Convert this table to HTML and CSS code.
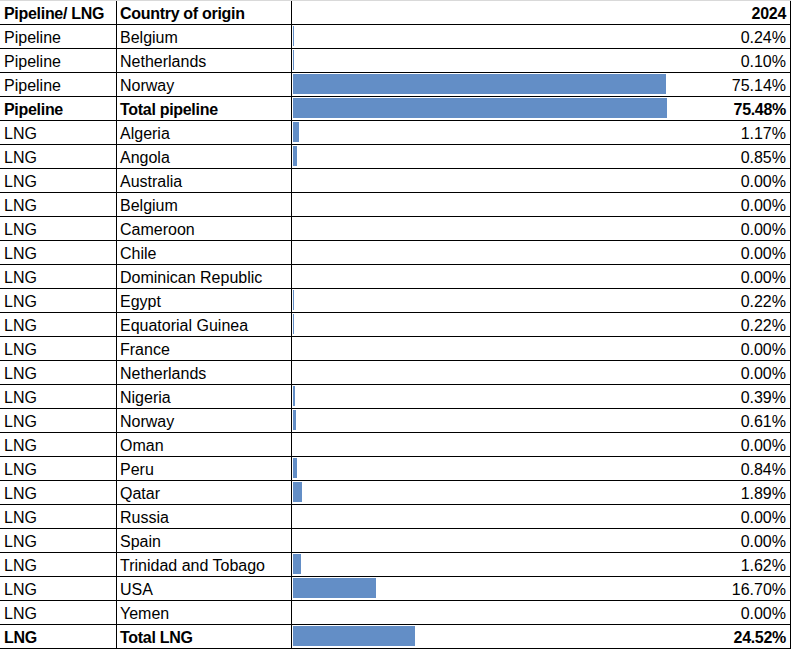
FILE: index.html
```html
<!DOCTYPE html>
<html>
<head>
<meta charset="utf-8">
<link rel="stylesheet" href="styles.css">
</head>
<body>
<div class="sheet">
  <div class="row bold"><div class="c1">Pipeline/ LNG</div><div class="c2">Country of origin</div><div class="c3"><span class="num">2024</span></div></div>
  <div class="row"><div class="c1">Pipeline</div><div class="c2">Belgium</div><div class="c3"><span class="bar" style="width:1.19px"></span><span class="num">0.24%</span></div></div>
  <div class="row"><div class="c1">Pipeline</div><div class="c2">Netherlands</div><div class="c3"><span class="bar" style="width:0.5px"></span><span class="num">0.10%</span></div></div>
  <div class="row"><div class="c1">Pipeline</div><div class="c2">Norway</div><div class="c3"><span class="bar" style="width:372.7px"></span><span class="num">75.14%</span></div></div>
  <div class="row bold"><div class="c1">Pipeline</div><div class="c2">Total pipeline</div><div class="c3"><span class="bar" style="width:374.4px"></span><span class="num">75.48%</span></div></div>
  <div class="row"><div class="c1">LNG</div><div class="c2">Algeria</div><div class="c3"><span class="bar" style="width:5.8px"></span><span class="num">1.17%</span></div></div>
  <div class="row"><div class="c1">LNG</div><div class="c2">Angola</div><div class="c3"><span class="bar" style="width:4.22px"></span><span class="num">0.85%</span></div></div>
  <div class="row"><div class="c1">LNG</div><div class="c2">Australia</div><div class="c3"><span class="num">0.00%</span></div></div>
  <div class="row"><div class="c1">LNG</div><div class="c2">Belgium</div><div class="c3"><span class="num">0.00%</span></div></div>
  <div class="row"><div class="c1">LNG</div><div class="c2">Cameroon</div><div class="c3"><span class="num">0.00%</span></div></div>
  <div class="row"><div class="c1">LNG</div><div class="c2">Chile</div><div class="c3"><span class="num">0.00%</span></div></div>
  <div class="row"><div class="c1">LNG</div><div class="c2">Dominican Republic</div><div class="c3"><span class="num">0.00%</span></div></div>
  <div class="row"><div class="c1">LNG</div><div class="c2">Egypt</div><div class="c3"><span class="bar" style="width:1.09px"></span><span class="num">0.22%</span></div></div>
  <div class="row"><div class="c1">LNG</div><div class="c2">Equatorial Guinea</div><div class="c3"><span class="bar" style="width:1.09px"></span><span class="num">0.22%</span></div></div>
  <div class="row"><div class="c1">LNG</div><div class="c2">France</div><div class="c3"><span class="num">0.00%</span></div></div>
  <div class="row"><div class="c1">LNG</div><div class="c2">Netherlands</div><div class="c3"><span class="num">0.00%</span></div></div>
  <div class="row"><div class="c1">LNG</div><div class="c2">Nigeria</div><div class="c3"><span class="bar" style="width:1.93px"></span><span class="num">0.39%</span></div></div>
  <div class="row"><div class="c1">LNG</div><div class="c2">Norway</div><div class="c3"><span class="bar" style="width:3.03px"></span><span class="num">0.61%</span></div></div>
  <div class="row"><div class="c1">LNG</div><div class="c2">Oman</div><div class="c3"><span class="num">0.00%</span></div></div>
  <div class="row"><div class="c1">LNG</div><div class="c2">Peru</div><div class="c3"><span class="bar" style="width:4.17px"></span><span class="num">0.84%</span></div></div>
  <div class="row"><div class="c1">LNG</div><div class="c2">Qatar</div><div class="c3"><span class="bar" style="width:9.37px"></span><span class="num">1.89%</span></div></div>
  <div class="row"><div class="c1">LNG</div><div class="c2">Russia</div><div class="c3"><span class="num">0.00%</span></div></div>
  <div class="row"><div class="c1">LNG</div><div class="c2">Spain</div><div class="c3"><span class="num">0.00%</span></div></div>
  <div class="row"><div class="c1">LNG</div><div class="c2">Trinidad and Tobago</div><div class="c3"><span class="bar" style="width:8.04px"></span><span class="num">1.62%</span></div></div>
  <div class="row"><div class="c1">LNG</div><div class="c2">USA</div><div class="c3"><span class="bar" style="width:82.8px"></span><span class="num">16.70%</span></div></div>
  <div class="row"><div class="c1">LNG</div><div class="c2">Yemen</div><div class="c3"><span class="num">0.00%</span></div></div>
  <div class="row bold"><div class="c1">LNG</div><div class="c2">Total LNG</div><div class="c3"><span class="bar" style="width:121.6px"></span><span class="num">24.52%</span></div></div>
</div>
</body>
</html>
```

FILE: styles.css
```css
html, body {
  margin: 0;
  padding: 0;
  background: #ffffff;
}

.sheet {
  width: 791px;
  border-top: 1px solid #d9d9d9;
  font-family: "Liberation Sans", Arial, sans-serif;
  font-size: 16px;
  color: #000000;
}

.row {
  display: grid;
  grid-template-columns: 117px 175px 499px;
  height: 24px;
  border-bottom: 1px solid #000000;
  box-sizing: border-box;
}

.row > div {
  border-right: 1px solid #000000;
  line-height: 21px;
  padding-top: 2px;
  white-space: nowrap;
  overflow: hidden;
}

.c1 {
  padding-left: 4px;
}

.c2 {
  padding-left: 3px;
}

.c3 {
  display: grid;
  padding-top: 0 !important;
}

.c3 > * {
  grid-area: 1 / 1;
}

.bar {
  display: block;
  height: 20px;
  margin-top: 1px;
  margin-left: 1px;
  background: #638ec6;
  align-self: start;
  justify-self: start;
}

.num {
  justify-self: end;
  padding-right: 4px;
  padding-top: 2px;
  line-height: 21px;
}

.bold {
  font-weight: bold;
}

.bold > div {
  letter-spacing: -0.3px;
}
```
